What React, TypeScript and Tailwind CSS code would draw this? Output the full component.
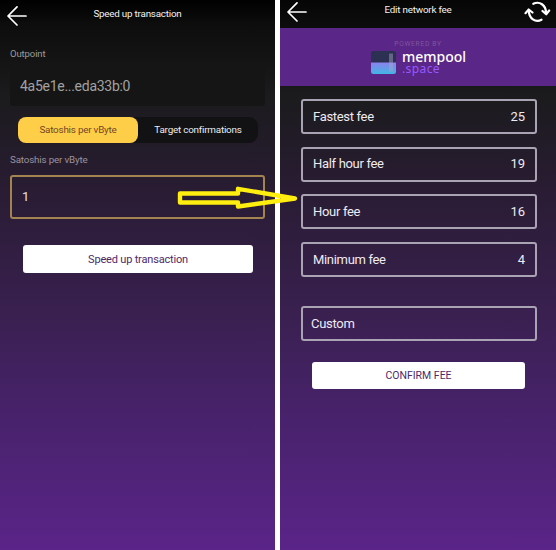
import type { ReactNode } from 'react';

function BackArrow() {
  return (
    <svg className="h-5 w-5" viewBox="0 0 20 20" fill="none" stroke="#fff" strokeWidth="1.7" strokeLinecap="round" strokeLinejoin="round">
      <path d="M10 .9 1 10l9 9M1.2 10H19" />
    </svg>
  );
}

function RefreshIcon() {
  return (
    <svg className="h-[22px] w-[27px]" viewBox="0 0 27 22" fill="none" stroke="#fff" strokeWidth="2.2" strokeLinecap="round" strokeLinejoin="round">
      <path d="M9.300 2.800C15.500 -.2 22 4 22 11.800M18.500 10l3.700 3.300 3-3.800" />
      <path d="M17.500 18.700C11.500 21.800 4.800 17.500 4.900 9.700M1.500 12.200l3.200-3.700 3.800 3" />
    </svg>
  );
}

function MempoolLogo() {
  return (
    <svg className="h-[23px] w-[25px]" viewBox="0 0 25 23">
      <defs>
        <linearGradient id="pool" x1="0" y1="0" x2="0" y2="1">
          <stop offset="0" stopColor="#8b82ee" />
          <stop offset="1" stopColor="#42b5e5" />
        </linearGradient>
        <clipPath id="tile">
          <rect width="25" height="23" rx="2.500" />
        </clipPath>
      </defs>
      <g clipPath="url(#tile)">
        <rect width="25" height="12" fill="#2c3052" />
        <rect y="11.500" width="25" height="11.500" fill="url(#pool)" />
        <rect x="18" y="2.500" width="4" height="18" rx=".5" fill="#aaa4c8" opacity=".45" />
      </g>
    </svg>
  );
}

function FeeRow({ label, value }: { label: string; value: string }) {
  return (
    <div className="flex h-[35px] w-[236px] items-center justify-between rounded-[3px] border-2 border-[#aaa3b4] pr-[10px] pl-[10px] text-[13px] text-[#eeebf1]">
      <span className="tracking-[-0.32px]">{label}</span>
      <span>{value}</span>
    </div>
  );
}

function Screen({ width, children }: { width: string; children: ReactNode }) {
  return (
    <div className={`flex h-full flex-col bg-[linear-gradient(180deg,#000_0px,#0d0d0d_24px,#1b1b1d_96px,#291c33_190px,#39204f_310px,#47226a_410px,#5a2488_550px)] ${width}`}>
      {children}
    </div>
  );
}

export default function App() {
  return (
    <div className="relative flex h-[550px] w-[556px] justify-between overflow-hidden bg-white font-['Roboto','Liberation_Sans',sans-serif]">
      <Screen width="w-[275px]">
        <header className="grid h-[34px] grid-cols-[32px_1fr_32px] pt-[6px]">
          <div className="pl-[7px]"><BackArrow /></div>
          <h1 className="text-center text-[9.800px] leading-[15px] tracking-[-0.2px] whitespace-nowrap text-[#f2f2f2]">Speed up transaction</h1>
        </header>
        <div className="flex flex-col px-[10px] pt-[12px]">
          <span className="h-[20px] text-[9.500px] leading-[15px] tracking-[-0.1px] text-[#9b9b9b]">Outpoint</span>
          <div className="flex h-[40px] items-center rounded-[3px] bg-[#151515] px-[10px] text-[14px] tracking-[-0.28px] text-[#a2a2a2]">4a5e1e...eda33b:0</div>
          <div className="mx-[8px] mt-[11px] flex h-[26px] w-[240px] rounded-[9px] bg-[#121114] text-[9.900px] tracking-[-0.22px]">
            <div className="flex w-[120px] items-center justify-center rounded-[8px] bg-[#ffce48] text-[#744626]">Satoshis per vByte</div>
            <div className="flex w-[120px] items-center justify-center text-[#ededed]">Target confirmations</div>
          </div>
          <span className="mt-[9px] h-[23px] text-[9.800px] leading-[16px] tracking-[-0.16px] text-[#9a929f]">Satoshis per vByte</span>
          <div className="flex h-[44px] items-center rounded-[3px] border-2 border-[#a3844f] px-[10px] text-[13px] text-[#e7e1eb]">1</div>
        </div>
        <button className="mt-[26px] ml-[23px] h-[28px] w-[230px] rounded-[3px] bg-white pt-[2px] text-[11px] tracking-[-0.18px] text-[#4b2a6b]">Speed up transaction</button>
      </Screen>

      <Screen width="w-[276px]">
        <header className="grid h-[28px] grid-cols-[32px_1fr_32px] bg-[linear-gradient(#060606,#0d0d0d)]">
          <div className="pt-[2px] pl-[7px]"><BackArrow /></div>
          <h1 className="pt-[2px] text-center text-[9.800px] leading-[15px] tracking-[-0.2px] text-[#f2f2f2]">Edit network fee</h1>
          <div className="pt-[1px]"><RefreshIcon /></div>
        </header>
        <div className="h-[58px] bg-[#5a2687]">
          <div className="flex h-[23px] items-end justify-center text-[6.700px] leading-[14px] tracking-[.7px] text-[#7f569c]">POWERED BY</div>
          <div className="flex pl-[91px] font-['Noto_Sans']">
            <MempoolLogo />
            <div className="flex flex-col pl-[6px]">
              <span className="text-[14px] leading-[11px] font-medium text-white">mempool</span>
              <span className="text-[12px] leading-[13px] tracking-[.4px] text-[#9858ff]">.space</span>
            </div>
          </div>
        </div>
        <div className="flex flex-col gap-[12.700px] pt-[13px] pl-[21px]">
          <FeeRow label="Fastest fee" value="25" />
          <FeeRow label="Half hour fee" value="19" />
          <FeeRow label="Hour fee" value="16" />
          <FeeRow label="Minimum fee" value="4" />
        </div>
        <div className="mt-[29px] ml-[21px] flex h-[35px] w-[236px] items-center rounded-[3px] border-2 border-[#aaa3b4] pl-[8px] text-[13px] tracking-[-0.3px] text-[#eeebf1]">Custom</div>
        <button className="mt-[21px] ml-[32px] h-[27px] w-[213px] rounded-[3px] bg-white pt-px text-[10.500px] text-[#4b2a6b]">CONFIRM FEE</button>
      </Screen>

      <svg className="absolute top-[184px] left-[176px]" width="126" height="28" viewBox="0 0 126 28" fill="none" stroke="#ffee10" strokeWidth="4.400" strokeLinejoin="round">
        <path d="M4 9.500H62V4.800L119 14.500 62 22.500V18.500H4Z" />
      </svg>
    </div>
  );
}
